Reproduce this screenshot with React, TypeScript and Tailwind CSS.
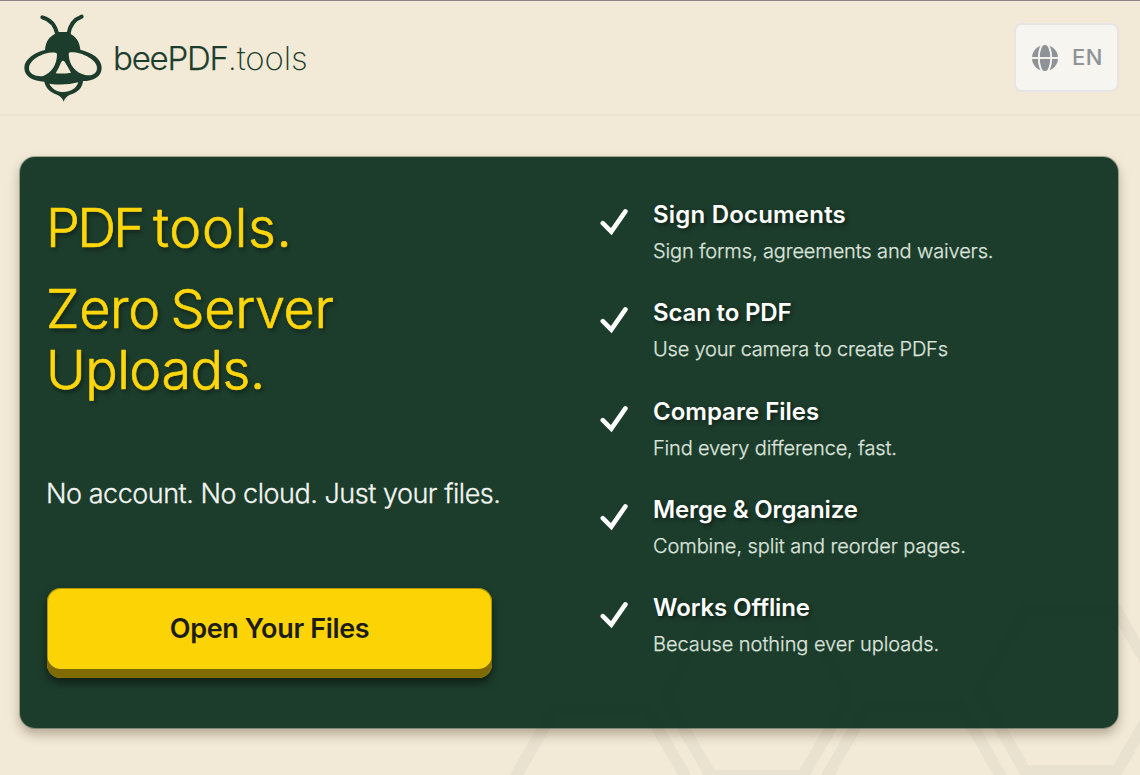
interface Feature {
  title: string;
  text: string;
  titleClass: string;
  textClass: string;
}

const FEATURES: Feature[] = [
  {
    title: "Sign Documents",
    text: "Sign forms, agreements and waivers.",
    titleClass: "tracking-[0.2px]",
    textClass: "tracking-[-0.13px]",
  },
  {
    title: "Scan to PDF",
    text: "Use your camera to create PDFs",
    titleClass: "tracking-[-0.15px]",
    textClass: "tracking-[-0.2px]",
  },
  {
    title: "Compare Files",
    text: "Find every difference, fast.",
    titleClass: "tracking-normal",
    textClass: "tracking-[-0.17px]",
  },
  {
    title: "Merge & Organize",
    text: "Combine, split and reorder pages.",
    titleClass: "tracking-[-0.15px]",
    textClass: "tracking-[-0.08px]",
  },
  {
    title: "Works Offline",
    text: "Because nothing ever uploads.",
    titleClass: "tracking-[-0.1px]",
    textClass: "tracking-[-0.05px]",
  },
];

// Centres of the honeycomb cells in the bottom right corner
const CELLS = [
  [600.5, 788],
  [757, 695],
  [914, 784],
  [1071, 690],
];

function BeeLogo() {
  return (
    <svg viewBox="0 0 300 315" className="h-[105px] w-[100px] shrink-0 text-[#1c3d2c]">
      <g fill="none" stroke="currentColor" strokeWidth="12" strokeLinecap="round">
        <path d="M82 37C105 43 121 60 127 88" />
        <path d="M200 35C178 43 164 62 160 88" />
      </g>
      <path
        fill="currentColor"
        fillRule="evenodd"
        d="M90 135C92 108 105 95 118 88Q124 81 132 81H158Q165 82 170 89C185 97 194 112 196 134C230 142 260 160 260 188C260 215 235 228 204 228C202 248 190 262 165 269Q150 276 146 290Q142 276 126 269C105 262 92 248 88 230C55 228 28 215 28 188C28 162 60 142 90 135Z
        M121 143C85 140 42 165 42 190C42 209 65 216 85 213C109 204 126 180 126 148Q126 143 121 143Z
        M166 142C200 140 246 165 246 188C246 207 230 213 210 210C180 202 162 180 161 147Q161 142 166 142Z
        M139 170Q144 165 149 170Q158 184 168 203Q146 207 122 205Q131 190 139 170Z
        M103 236Q146 243 190 232C184 252 165 261 146 261C125 261 110 250 103 236Z"
      />
    </svg>
  );
}

function GlobeIcon() {
  return (
    <svg viewBox="0 0 28 28" className="h-7 w-7 shrink-0">
      <circle cx="14" cy="14" r="13" fill="#8f9398" />
      <g fill="none" stroke="#f7f5ef" strokeWidth="1.9">
        <path d="M0 14h28" />
        <ellipse cx="14" cy="14" rx="6.2" ry="14.5" />
      </g>
    </svg>
  );
}

function CheckIcon() {
  return (
    <svg viewBox="0 0 28 28" className="mt-[9px] -ml-px h-7 w-7 shrink-0">
      <path
        d="M2.8 15.2L11.3 23.6L25.4 3.4"
        fill="none"
        stroke="#ffffff"
        strokeWidth="4.6"
        strokeLinecap="round"
      />
    </svg>
  );
}

function Honeycomb() {
  return (
    <svg
      viewBox="0 0 1140 775"
      className="pointer-events-none absolute inset-0 h-[775px] w-[1140px]"
    >
      {CELLS.map(([x, y]) => (
        <path
          key={x}
          transform={`translate(${x} ${y})`}
          d="M-92 0L-46 -80H46L92 0L46 80H-46Z"
          fill="none"
          stroke="#0c2c1c"
          strokeOpacity="0.032"
          strokeWidth="12"
        />
      ))}
    </svg>
  );
}

export default function App() {
  return (
    <div className="relative h-[775px] w-[1140px] overflow-hidden border-t border-[#8f8489] bg-[#f2e9d7] font-['Inter',sans-serif]">
      {/* Header */}
      <header className="flex h-[115px] items-start justify-between border-b-2 border-[#ebe2d0] pr-[21px] pl-[15px]">
        <div className="flex pt-1">
          <BeeLogo />
          <div className="mt-[30px] -ml-[2px] text-[33px] leading-[46px] whitespace-nowrap text-[#1c3d2c]">
            <span className="font-light tracking-[-1.2px] [-webkit-text-stroke:0.25px]">beePDF</span>
            <span className="font-extralight tracking-[-0.15px]">.tools</span>
          </div>
        </div>
        <button className="mt-[22px] flex h-[69px] w-[105px] items-center rounded-lg border-2 border-[#e6e5e3] bg-[#f7f5ef] pl-[15px] text-[22px] font-medium text-[#8f9398]">
          <GlobeIcon />
          <span className="ml-[13px] tracking-[0.6px]">EN</span>
        </button>
      </header>

      {/* Hero */}
      <main className="mx-5 mt-[41px] flex h-[571px] w-[1098px] rounded-[15px] bg-[#1c3d2c] shadow-[0_0_0_1px_rgba(28,61,44,0.35),0_6px_12px_rgba(60,40,20,0.35)]">
        <section className="w-[581px] pl-7">
          <h1 className="-ml-[2px] pt-[40px] text-[54px] leading-[61px] font-light text-[#ffd60a] [-webkit-text-stroke:0.7px] [text-shadow:2px_3px_4px_rgba(0,0,0,0.45)]">
            <span className="block [word-spacing:-2px]">
              <span className="tracking-[-2.7px]">PDF </span>
              <span className="tracking-[0.7px]">tools.</span>
            </span>
            <span className="mt-[20px] block tracking-[-0.4px] [word-spacing:-4px]">
              Zero Server
            </span>
            <span className="block tracking-[-0.5px]">Uploads.</span>
          </h1>
          <p className="mt-[74px] -ml-[2px] text-[27px] leading-[40px] font-light tracking-[-0.48px] whitespace-nowrap text-[#f3f5f2] [-webkit-text-stroke:0.3px]">
            No account. No cloud. Just your files.
          </p>
          <button className="mt-[74px] -ml-px flex h-[90px] w-[445px] items-center justify-center rounded-[14px] bg-[#fcd405] pb-[7px] text-[27px] font-semibold tracking-[-0.35px] text-[#1c1d18] shadow-[inset_0_-9px_0_#7f6a03,inset_0_0_0_1px_rgba(127,106,3,0.6),0_5px_10px_rgba(0,0,0,0.5)]">
            Open Your Files
          </button>
        </section>

        <ul className="pt-[42px]">
          {FEATURES.map((feature) => (
            <li key={feature.title} className="flex h-[98.25px] whitespace-nowrap">
              <CheckIcon />
              <div className="ml-[25px]">
                <h2
                  className={`text-[24px] leading-[32px] font-semibold text-white [text-shadow:2px_2px_4px_rgba(0,0,0,0.5)] ${feature.titleClass}`}
                >
                  {feature.title}
                </h2>
                <p
                  className={`mt-1 text-[20px] leading-[32px] font-light text-[#dde3dd] [-webkit-text-stroke:0.25px] ${feature.textClass}`}
                >
                  {feature.text}
                </p>
              </div>
            </li>
          ))}
        </ul>
      </main>

      <Honeycomb />
    </div>
  );
}
